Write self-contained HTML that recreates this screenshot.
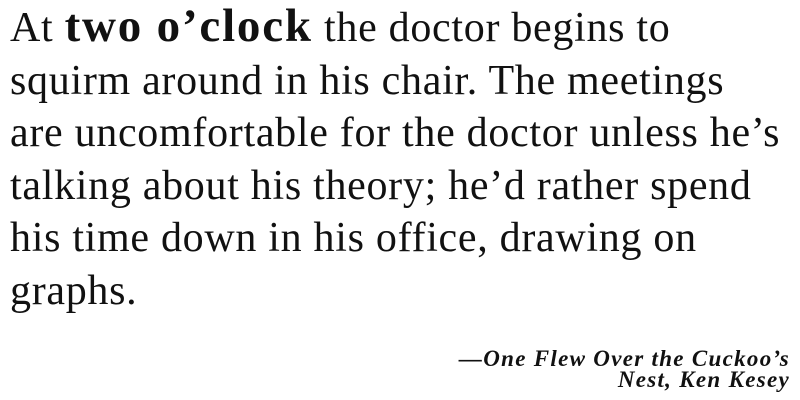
<!DOCTYPE html>
<html><head><meta charset="utf-8"><style>
html,body{margin:0;padding:0;background:#fff;width:800px;height:400px;overflow:hidden}
.q{position:absolute;left:10px;top:2px;font-family:"Liberation Serif",serif;font-size:42px;line-height:52.5px;color:#111;white-space:nowrap;letter-spacing:0.7px}
.q b{font-weight:900;letter-spacing:1.8px;font-size:47px;line-height:40px}
.a{position:absolute;right:10px;top:348px;font-family:"Liberation Serif",serif;font-style:italic;font-weight:bold;font-size:23px;line-height:21px;text-align:right;color:#111;letter-spacing:1.3px;white-space:nowrap}
</style></head><body>
<div class="q">At <b>two o’clock</b> the doctor begins to<br>squirm around in his chair. The meetings<br>are uncomfortable for the doctor unless he’s<br>talking about his theory; he’d rather spend<br>his time down in his office, drawing on<br>graphs.</div>
<div class="a">—One Flew Over the Cuckoo’s<br>Nest, Ken Kesey</div>
</body></html>
